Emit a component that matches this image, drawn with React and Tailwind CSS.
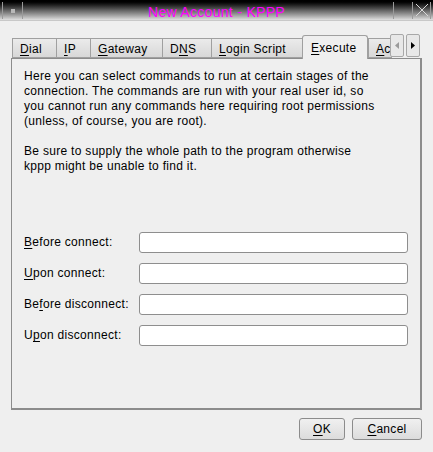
import React from "react";

const U = ({ children }) => <span className="underline underline-offset-2">{children}</span>;

function Tab({ children, w, active, last }) {
  if (active) {
    return (
      <div
        className={`${w} shrink-0 h-[24px] relative z-10 -mb-px border border-b-0 border-[#a0a0a0] rounded-t-[3px] bg-[#efefef] pl-[8px] pt-[3px] text-[12px] tracking-[0.3px] text-black`}
      >
        {children}
      </div>
    );
  }
  return (
    <div
      className={`${w} shrink-0 h-[20px] border ${last ? "" : "border-r-0"} border-[#a0a0a0] bg-gradient-to-b from-[#ebebeb] to-[#d8d8d8] pl-[7px] pt-[1px] text-[12px] tracking-[0.3px] text-black whitespace-nowrap`}
    >
      {children}
    </div>
  );
}

function Row({ label }) {
  return (
    <div className="flex items-center h-[20px]">
      <div className="w-[115px] text-[12px] tracking-[0.3px] text-black whitespace-nowrap">{label}</div>
      <div className="w-[270px] h-[21px] bg-white border border-[#8e8e8e] rounded-[3px]" />
    </div>
  );
}

export default function App() {
  return (
    <div
      className="relative w-[433px] h-[452px] bg-[#efefef] overflow-hidden flex flex-col"
      style={{ fontFamily: '"Liberation Sans", Arial, sans-serif' }}
    >
      {/* title bar */}
      <div className="h-[21px] relative flex items-center bg-gradient-to-b from-black via-[#606060] to-[#e0e0e0] border-b border-[#c8c8c8]">
        <div className="absolute left-[2px] top-[2px] w-[21px] h-[17px] border-l border-r border-[#9a9a9a] flex items-center justify-center">
          <div className="w-[4px] h-[4px] bg-[#b8b8b8]" />
        </div>
        <div className="flex-1 text-center text-[14px] leading-none text-[#ff00ff] pt-[3px] tracking-[0.3px]">New Account - KPPP</div>
        <div className="absolute left-[393px] top-[2px] w-[20px] h-[17px] border-l border-r border-[#9a9a9a]" />
        <div className="absolute left-[413px] top-[2px] w-[18px] h-[17px] border-r border-[#9a9a9a]">
          <svg width="18" height="17" viewBox="0 0 18 17">
            <path d="M3 2 L15 14 M15 2 L3 14" stroke="#d8d8d8" strokeWidth="1" />
          </svg>
        </div>
      </div>

      {/* tabs */}
      <div className="mt-[13px] h-[24px] ml-[12px] w-[378px] flex items-end">
        <Tab w="w-[44px]">
          <U>D</U>ial
        </Tab>
        <Tab w="w-[34px]">
          <U>I</U>P
        </Tab>
        <Tab w="w-[72px]">
          <U>G</U>ateway
        </Tab>
        <Tab w="w-[49px]">
          D<U>N</U>S
        </Tab>
        <Tab w="w-[91px]">
          <U>L</U>ogin Script
        </Tab>
        <Tab w="w-[66px]" active>
          <U>E</U>xecute
        </Tab>
        <Tab w="w-[24px]" last>
          <U>A</U>c
        </Tab>
      </div>
      <div className="absolute left-[390px] top-[34px] w-[14px] h-[23px] border border-[#a8a8a8] rounded-[2px] bg-[#e8e8e8] flex items-center justify-center">
        <svg width="4" height="7" viewBox="0 0 4 7">
          <path d="M4 0 L0 3.5 L4 7 Z" fill="#9a9a9a" />
        </svg>
      </div>
      <div className="absolute left-[406px] top-[34px] w-[14px] h-[23px] border border-[#a8a8a8] rounded-[2px] bg-[#e8e8e8] flex items-center justify-center">
        <svg width="4" height="7" viewBox="0 0 4 7">
          <path d="M0 0 L4 3.5 L0 7 Z" fill="#000" />
        </svg>
      </div>

      {/* panel */}
      <div className="ml-[11px] w-[411px] h-[352px] border border-[#8c8c8c] border-b-2 border-r-2 px-[12px] pt-[10px]">
        <p className="text-[12px] leading-[15px] tracking-[0.3px] text-black whitespace-nowrap">
          Here you can select commands to run at certain stages of the
          <br />
          connection. The commands are run with your real user id, so
          <br />
          you cannot run any commands here requiring root permissions
          <br />
          (unless, of course, you are root).
        </p>
        <p className="mt-[15px] text-[12px] leading-[15px] tracking-[0.3px] text-black whitespace-nowrap">
          Be sure to supply the whole path to the program otherwise
          <br />
          kppp might be unable to find it.
        </p>
        <div className="mt-[58px] flex flex-col gap-[11px]">
          <Row label={<><U>B</U>efore connect:</>} />
          <Row label={<><U>U</U>pon connect:</>} />
          <Row label={<>Be<U>f</U>ore disconnect:</>} />
          <Row label={<>U<U>p</U>on disconnect:</>} />
        </div>
      </div>

      {/* buttons */}
      <div className="flex justify-end gap-[7px] pr-[11px] mt-[8px]">
        <button className="w-[46px] h-[22px] border border-[#8c8c8c] rounded-[3px] bg-gradient-to-b from-[#f0f0f0] to-[#dcdcdc] text-[12px] tracking-[0.3px] text-black">
          <U>O</U>K
        </button>
        <button className="w-[70px] h-[22px] border border-[#8c8c8c] rounded-[3px] bg-gradient-to-b from-[#f0f0f0] to-[#dcdcdc] text-[12px] tracking-[0.3px] text-black">
          <U>C</U>ancel
        </button>
      </div>
    </div>
  );
}
